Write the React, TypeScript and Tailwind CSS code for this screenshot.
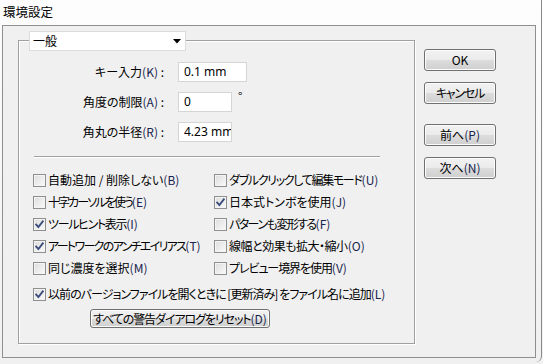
import React from "react";

const FONT = "font-['Noto_Sans_CJK_JP','Noto_Sans',sans-serif] [font-feature-settings:'palt']";

function Mn({ k }: { k: string }) {
  return <span className="text-[#18244e] tracking-normal">({k})</span>;
}

function Check({ on }: { on?: boolean }) {
  return (
    <span className="w-[13px] h-[13px] shrink-0 border border-[#8e8f8f] bg-[linear-gradient(135deg,#dcdcdc,#fbfbfb)] shadow-[inset_0_0_0_1px_#f4f4f4] flex items-center justify-center">
      {on && (
        <svg width="11" height="11" viewBox="0 0 11 11">
          <path d="M2.2 5.6 L4.4 8 L8.8 2.4" fill="none" stroke="#3c4f7c" strokeWidth="1.9" strokeLinecap="square" />
        </svg>
      )}
    </span>
  );
}

function Row({ on, t = "", k, children }: { on?: boolean; t?: string; k: string; children: React.ReactNode }) {
  return (
    <div className="h-[22px] flex items-center gap-[2px]">
      <Check on={on} />
      <span className="text-[12px] leading-none text-black whitespace-nowrap">
        <span className={t}>{children}</span>
        <Mn k={k} />
      </span>
    </div>
  );
}

const BTN =
  "border border-[#707070] rounded-[3px] bg-[linear-gradient(to_bottom,#f2f2f2_0%,#ebebeb_50%,#dddddd_50%,#cfcfcf_100%)] shadow-[inset_0_0_0_1px_#fcfcfc] flex items-center justify-center text-[12px] text-black leading-none whitespace-nowrap";

function Field({ label, k, value, w, unit }: { label: string; k: string; value: string; w: string; unit?: boolean }) {
  return (
    <div className="flex items-center h-[20px]">
      <div className="w-[145px] text-right text-[12px] leading-none whitespace-nowrap">
        {label}
        <Mn k={k} /> :
      </div>
      <div className={`ml-[14px] h-[20px] ${w} bg-white border border-[#d5d5d5] flex items-center pl-[5px] overflow-hidden text-[12px] leading-none whitespace-nowrap font-['Noto_Sans',sans-serif]`}>
        {value}
      </div>
      {unit && <span className="ml-[6px] self-start -mt-[2px] text-[12px] leading-none">°</span>}
    </div>
  );
}

export default function App() {
  return (
    <div className={`w-[543px] h-[364px] overflow-hidden bg-[linear-gradient(to_bottom,#fdfdfd,#f0f0f0)] flex ${FONT} text-black`}>
      <div className="w-[542px] h-[362px] flex flex-col border-r border-[#8a8a8a] rounded-br-[6px]">
        <div className="h-[25px] pl-[3px] pt-[3px] text-[12.5px] leading-[18px]">環境設定</div>
        <div className="ml-[2px] w-[534px] h-[333px] border border-[#8e8f8f] bg-[#f0f0f0] flex items-start">
          {/* group box */}
          <div className="ml-[15px] mt-[14px] w-[397px] h-[304px] border border-[#a0a0a0] shadow-[1px_1px_0_#ffffff,inset_1px_1px_0_#ffffff] flex flex-col">
            <div className="ml-[10px] -mt-[10px] w-[157px] h-[20px] bg-white border border-[#dcdcdc] flex items-center">
              <span className="pl-[3px] text-[12px] leading-none flex-1">一般</span>
              <svg width="8" height="5" viewBox="0 0 8 5" className="mr-[4px]">
                <path d="M0 0 H8 L4 4.5 Z" fill="#000" />
              </svg>
            </div>
            <div className="mt-[11px] flex flex-col gap-[10px]">
              <Field label="キー入力" k="K" value="0.1 mm" w="w-[69px]" />
              <Field label="角度の制限" k="A" value="0" w="w-[54px]" unit />
              <Field label="角丸の半径" k="R" value="4.23 mm" w="w-[54px]" />
            </div>
            <div className="mt-[14px] ml-[15px] w-[346px] h-[2px] border-t border-[#a0a0a0] border-b border-b-white" />
            <div className="mt-[11px] ml-[14px] flex">
              <div className="w-[181px] flex flex-col">
                <Row k="B">自動追加 / 削除しない</Row>
                <Row k="E" t="tracking-[-0.16em]">十字カーソルを使う</Row>
                <Row on k="I" t="tracking-[-0.11em]">ツールヒント表示</Row>
                <Row on k="T" t="tracking-[-0.14em]">アートワークのアンチエイリアス</Row>
                <Row k="M">同じ濃度を選択</Row>
              </div>
              <div className="flex flex-col">
                <Row k="U" t="tracking-[-0.11em]">ダブルクリックして編集モード</Row>
                <Row on k="J">日本式トンボを使用</Row>
                <Row k="F" t="tracking-[-0.13em]">パターンも変形する</Row>
                <Row k="O" t="tracking-[-0.04em]">線幅と効果も拡大・縮小</Row>
                <Row k="V" t="tracking-[-0.09em]">プレビュー境界を使用</Row>
              </div>
            </div>
            <div className="mt-[4px] ml-[14px]">
              <Row on k="L" t="tracking-[-0.08em]">以前のバージョンファイルを開くときに [更新済み] をファイル名に追加</Row>
            </div>
            <div className={`mt-[4px] ml-[71px] w-[180px] h-[19px] ${BTN}`}>
              <span className="tracking-[-0.09em]">すべての警告ダイアログをリセット</span>
              <Mn k="D" />
            </div>
          </div>
          {/* buttons */}
          <div className="ml-[9px] mt-[23px] flex flex-col">
            <div className={`w-[72px] h-[22px] ${BTN}`}>OK</div>
            <div className={`mt-[11px] w-[72px] h-[22px] ${BTN} tracking-[-0.1em]`}>キャンセル</div>
            <div className={`mt-[20px] w-[72px] h-[22px] ${BTN}`}>
              前へ<Mn k="P" />
            </div>
            <div className={`mt-[11px] w-[72px] h-[22px] ${BTN}`}>
              次へ<Mn k="N" />
            </div>
          </div>
        </div>
      </div>
    </div>
  );
}
